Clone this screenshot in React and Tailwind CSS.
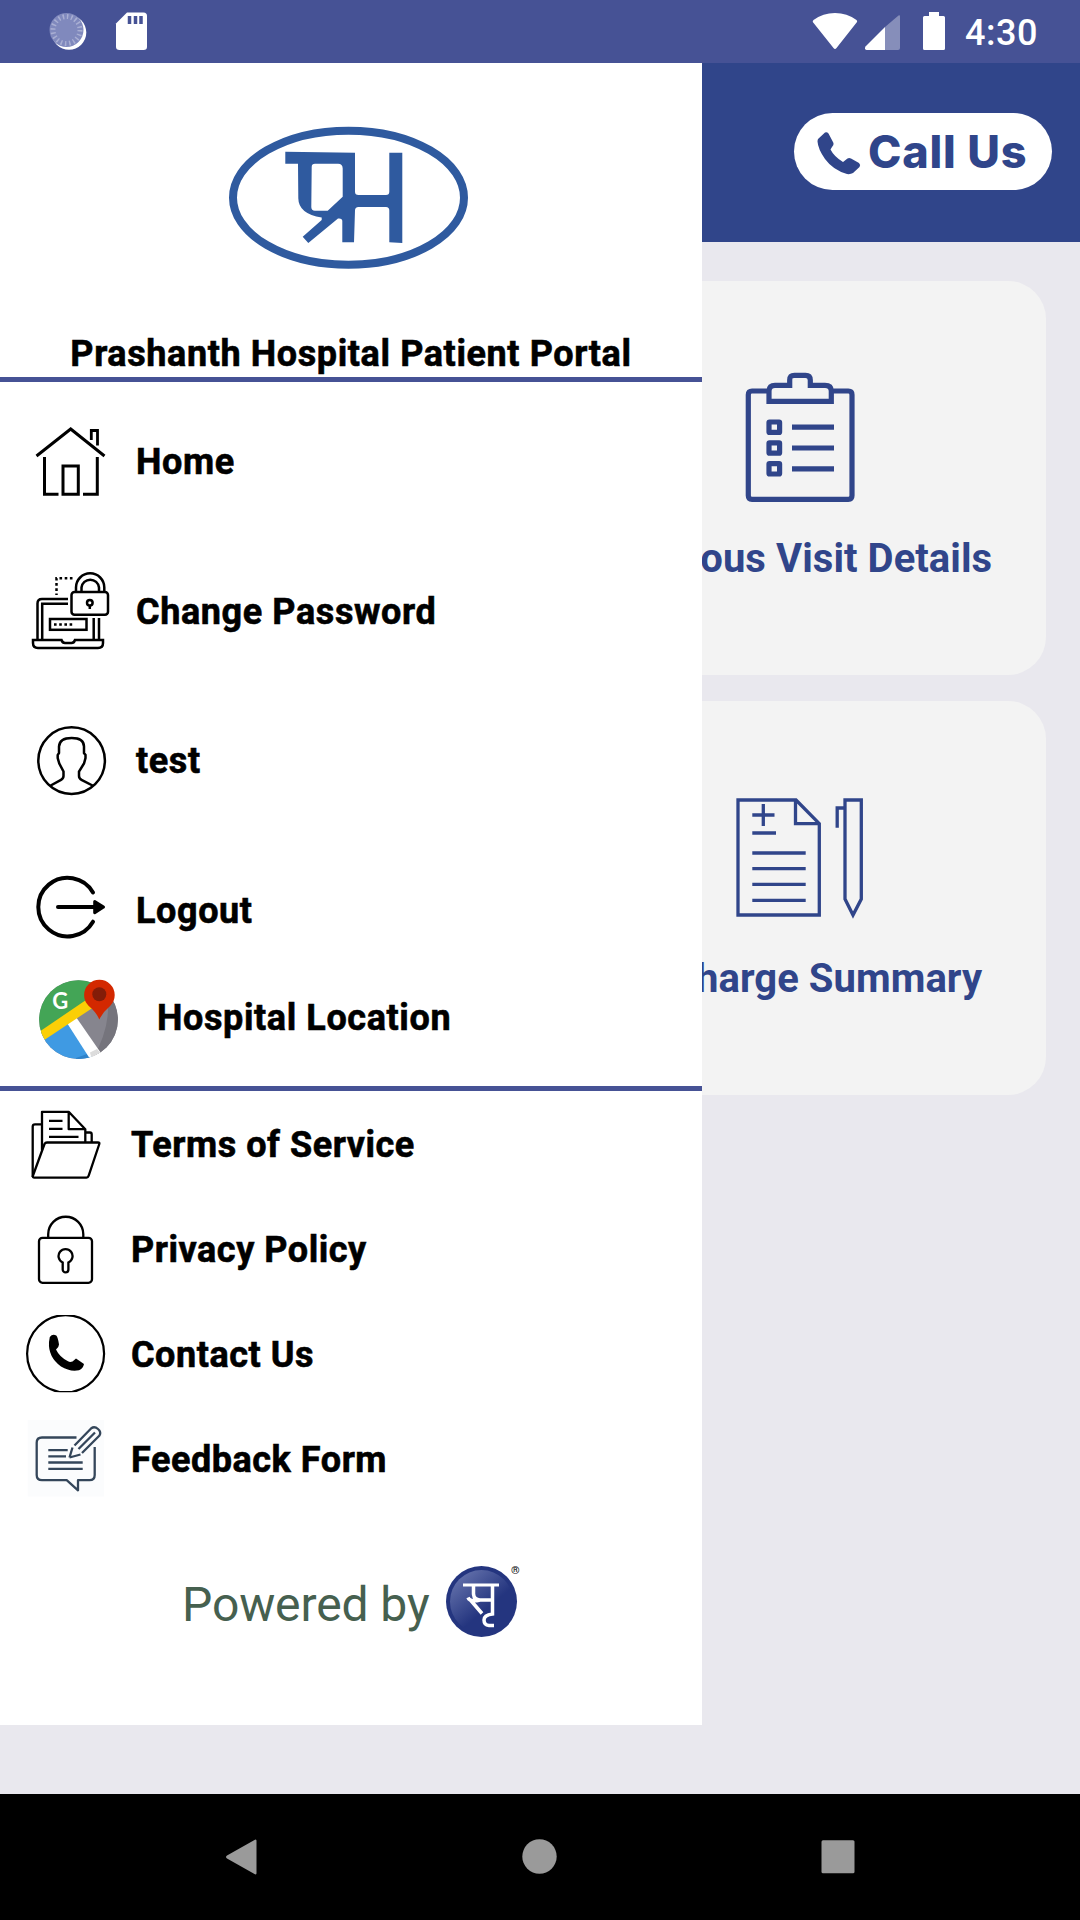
import React from 'react';

const HospitalLogo = () => (
  <svg width="248" height="150" viewBox="0 0 248 150" className="ml-[225px] mt-[59px] shrink-0">
    <ellipse cx="123.5" cy="75.7" rx="115.5" ry="67" fill="none" stroke="#2f5a9f" strokeWidth="8" />
    <path
      fill="#2f5a9f"
      fillRule="evenodd"
      d="M60.3 29.7 130 30.7V69.7Q130 73 133.5 73H161Q164.3 73 164.3 69.7V30.7H177.3V121L164.3 120.3V88.5Q164.3 85 161 85H133.5Q130 85 130 88.5L129 120.3H117.3V99Q117.3 96 113 96.500L83.300 121 77.700 114.700 96.700 98V95.500Q73.500 92 73.300 76.300L73 41.700H60.300ZM90 41.700Q86.700 41.700 86.700 45L86.300 85Q86.300 88.700 90 88.700H102.700L117.700 74.700V46.500Q117.700 41.700 113 41.700Z"
    />
  </svg>
);

const HomeIcon = () => (
  <g strokeWidth="3">
    <path d="M36.500 34 70.700 7 104.500 34" />
    <path d="M44.500 35V72.300H58.500M97.300 35V72.300H83" />
    <path d="M63 72.300V44H78.300V72.300Z" />
    <path strokeWidth="2.800" d="M91.300 18V8.500H97.500V23.500" />
  </g>
);

const PasswordIcon = () => (
  <g strokeWidth="2.500">
    <path d="M76 20V15.500A14 14 0 0 1 104.300 15.500V20M81.500 20V15.500A8.800 8.800 0 0 1 99 15.500V20" />
    <rect x="71.500" y="20" width="36.500" height="22.700" rx="3" />
    <circle cx="89.800" cy="30.800" r="2.800" />
    <path d="M89.800 34V37" />
    <path strokeDasharray="2.600 2.600" d="M72.500 6.300H56.500V23" />
    <path d="M68 27H42Q37.500 27 37.500 31.500V67.500M68 31.700H42.200V67.500M93.700 46V67.500M99 46V67.500" />
    <path d="M33 68H61.500Q62.500 71 65 71H71.500Q74 71 75 68H103V71Q103 76 98 76H38Q33 76 33 71Z" />
    <rect x="50" y="47" width="36.500" height="10.800" />
    <path strokeDasharray="2.600 2.600" d="M54 52.500H72.500" />
  </g>
);

const UserIcon = () => (
  <g strokeWidth="2.500">
    <circle cx="71.600" cy="39.600" r="33.300" />
    <path d="M50.700 64.500 61 58.800Q63.500 57.500 63.500 55V50.500L59.300 42.500 57.700 37V34L59 32V25.500Q59.500 17 71.700 17T84 25.500V32L85.500 34V37L84 42.500 79 50.500V55Q79 57.500 81.500 58.800L92.500 64.500" />
  </g>
);

const LogoutIcon = () => (
  <g strokeWidth="4">
    <path strokeLinecap="round" d="M93 21.500A29.300 29.300 0 1 0 93 50.700" />
    <path strokeLinecap="round" d="M58 36.100H95" />
    <path strokeLinejoin="round" fill="#000" strokeWidth="3" d="M94.700 30.600 103.500 36.100 94.700 41.700Z" />
  </g>
);

const FolderIcon = () => (
  <g strokeWidth="2.300" strokeLinejoin="round">
    <path d="M41.500 19.300H35Q32.700 19.300 32.700 21.500V72M42 45V6.800H68.700L85.300 24.200V37M68.700 6.800V24.200H85.300M86 27.500H90Q91.700 27.500 91.700 29.500V37" />
    <path d="M47 37.500H98Q99.800 37.500 99.300 39L88.700 70.700Q88 72.700 86.500 72.700H34.500Q32.300 72.700 33 70.500L44.500 39Q45.300 37.500 47 37.500Z" />
    <path d="M49 15.800H62.500M49 23.800H62.500M49 31.800H78.500" />
  </g>
);

const LockIcon = () => (
  <g strokeWidth="2.300">
    <path d="M48.200 27.500V24.300A17.500 17.500 0 0 1 83.300 24.300V27.500" />
    <rect x="39" y="27.800" width="53" height="45" rx="3.500" />
    <path d="M62.700 52.500A7 7 0 1 1 68.400 52.500V59.500A2.800 2.800 0 0 1 62.700 59.500Z" />
  </g>
);

const ContactIcon = () => (
  <g>
    <clipPath id="ring">
      <rect x="0" y="-4" width="131" height="81.300" />
    </clipPath>
    <circle clipPath="url(#ring)" cx="65.600" cy="38.700" r="38.500" strokeWidth="2.200" />
    <path
      fill="#000"
      stroke="none"
      d="M49.800 22Q52.500 18.300 56.300 20.500Q58 22.500 59 29.500Q59 32 56 34.500Q59.500 42 68 46.300Q70 47.500 72.500 46.500L76 43.500 84 49Q83 54 79 55.200Q70 57 61 51.500Q48 42 49 27Z"
    />
  </g>
);

const FeedbackIcon = () => (
  <g stroke="#34465a" strokeWidth="2.300" strokeLinejoin="round">
    <rect x="27.700" y="0" width="76.300" height="76.500" fill="#fbfcfd" stroke="none" />
    <path d="M76.500 17.500H42Q36.700 17.500 36.700 22.800V55Q36.700 60.200 42 60.200H66.700L78 70.300V60.200H89.500Q94.700 60.200 94.700 55V27" />
    <path d="M48.300 30.200H67.700M48.300 36.300H66M48.300 42.500H82.700M48.300 48.800H82.700" />
    <path d="M69.500 37.500 72.500 27.500M69.500 37.500 80.500 34.500M74.500 25.500 91.300 8.300Q94.500 6 98 9T99.500 15.500L82 33M78.500 29 95 12.500" />
  </g>
);

const MapIcon = () => (
  <svg width="157" height="84" viewBox="0 0 157 84" className="shrink-0">
    <clipPath id="map">
      <circle cx="78.500" cy="43.700" r="39.400" />
    </clipPath>
    <g clipPath="url(#map)">
      <rect x="38" y="0" width="84" height="84" fill="#86858e" />
      <path d="M107 20Q112 50 92 84H122V20Z" fill="#75747c" />
      <path d="M38 0H110V14L38 62Z" fill="#43a556" />
      <path d="M40 60 69 44.500 94 84H38Z" fill="#3f9ae3" />
      <path d="M87 78 92 84H76V82Z" fill="#2f83cb" />
      <path d="M67 47 76 41 103 80 92 86Z" fill="#fff" />
      <path d="M90 76.500 97 73 103 80 92 84Z" fill="#dcdcdc" />
      <path d="M36 58 100 14.500 106 23 42 65.500Z" fill="#fbcf06" />
    </g>
    <text x="52.300" y="32.500" fontSize="22" fontWeight="700" fill="#fff" className="font-['Lato',sans-serif] [-webkit-text-stroke:0px]">G</text>
    <path d="M99.300 43.400Q96 36 88.500 29.800A15.300 15.300 0 1 1 110.300 29.800Q103 36 99.300 43.400Z" fill="#d32800" />
    <circle cx="99.300" cy="18.200" r="7" fill="#831c08" />
  </svg>
);

const ClipboardIcon = () => (
  <svg width="112" height="132" viewBox="0 0 112 132" fill="none" stroke="#30458a" strokeWidth="5.200">
    <path d="M25 19H8Q4.300 19 4.300 22.700V123.500Q4.300 127.300 8 127.300H104.300Q108 127.300 108 123.500V22.700Q108 19 104.300 19H87.300" />
    <path d="M25 29.300V19Q25 13.300 31 13.300H45.700V8Q45.700 3.300 50.500 3.300H61.500Q66.300 3.300 66.300 8V13.300H81Q87.300 13.300 87.300 19V29.300Z" />
    {[50, 70.8, 91.6].map((y) => (
      <g key={y}>
        <rect x="25" y={y} width="10.600" height="10.400" rx="0.500" />
        <path d={`M48 ${y + 5.2}H90`} />
      </g>
    ))}
  </svg>
);

const DischargeIcon = () => (
  <svg width="134" height="122" viewBox="0 0 134 122" fill="none" stroke="#30458a" strokeWidth="3.300">
    <path d="M5 3H63L86.300 26.700V118H5ZM62.500 3V26.700H86.300" />
    <path d="M19.300 18H41.500M30.300 7V29M19.300 36H43M19.300 56H72.700M19.300 71.700H72.700M19.300 87.400H72.700M19.300 103.300H72.700" />
    <path d="M112 3H128.300V102L120 118 112 102ZM112 11H104.200V30.700" />
  </svg>
);

const menuItems = [
  { label: 'Home', icon: HomeIcon },
  { label: 'Change Password', icon: PasswordIcon },
  { label: 'test', icon: UserIcon },
  { label: 'Logout', icon: LogoutIcon },
];

const infoItems = [
  { label: 'Terms of Service', icon: FolderIcon },
  { label: 'Privacy Policy', icon: LockIcon },
  { label: 'Contact Us', icon: ContactIcon },
  { label: 'Feedback Form', icon: FeedbackIcon },
];

const cards = [
  { label: 'Previous Visit Details', icon: ClipboardIcon },
  { label: 'Discharge Summary', icon: DischargeIcon },
];

const StatusBar = () => (
  <div className="flex h-[63px] items-start justify-between bg-[#465295] text-white">
    <svg width="160" height="63" viewBox="0 0 160 63">
      <circle cx="69" cy="32.500" r="17.300" fill="#fff" />
      <circle cx="66.500" cy="30" r="17" fill="#8089bd" />
      <circle cx="66.500" cy="30" r="13.500" fill="none" stroke="#a9afd3" strokeWidth="5" strokeDasharray="1.500 2.740" />
      <path fill="#fff" d="M127 12.500H143.500Q147 12.500 147 16V47Q147 50 143.500 50H119.500Q116 50 116 47V23.500Z" />
      <path stroke="#465295" strokeWidth="3.500" d="M129.500 16V24M135.500 16V24M141 16V24" />
    </svg>
    <div className="flex">
      <svg width="153" height="63" viewBox="0 0 153 63" fill="#fff">
        <path d="M.8 22Q.5 20.800 1.500 20Q11 13 23 13T44.500 20Q45.500 20.800 45 22L24.500 48Q23 50 21.500 48Z" />
        <path fillOpacity=".35" d="M73 27 86.500 15.500Q88 14.500 88 16.500V48Q88 50 86 50H73Z" />
        <path d="M73 27V50H54.500Q52 49.500 53.500 46.500Z" />
        <path d="M117 12H127V16H131.500Q133 16 133 17.500V48.500Q133 50 131.500 50H112.500Q111 50 111 48.500V17.500Q111 16 112.500 16H117Z" />
      </svg>
      <span className="w-[115px] pt-[12px] text-[36px] leading-[42px] font-medium tracking-[0.5px]">4:30</span>
    </div>
  </div>
);

const Drawer = () => (
  <aside className="absolute top-0 left-0 flex h-[1662px] w-[702px] flex-col bg-white text-[36px] leading-[42px] font-bold tracking-[0.6px] text-black [-webkit-text-stroke:0.6px]">
    <div className="flex h-[319px] flex-col justify-between border-b-[5px] border-[#465295] pb-[2px]">
      <HospitalLogo />
      <h1 className="text-center">Prashanth Hospital Patient Portal</h1>
    </div>

    <div className="h-[709px] border-b-[5px] border-[#465295] pt-[5px]">
      {menuItems.map(({ label, icon: Icon }) => (
        <div key={label} className="flex h-[149.7px] items-center">
          <svg width="136" height="80" viewBox="0 0 136 80" fill="none" stroke="#000">
            <Icon />
          </svg>
          <span>{label}</span>
        </div>
      ))}
      <div className="flex h-[64px] items-center">
        <MapIcon />
        <span>Hospital Location</span>
      </div>
    </div>

    <div className="pt-px tracking-[0.54px]">
      {infoItems.map(({ label, icon: Icon }) => (
        <div key={label} className="flex h-[105px] items-center">
          <svg width="131" height="80" viewBox="0 0 131 80" fill="none" stroke="#000">
            <Icon />
          </svg>
          <span>{label}</span>
        </div>
      ))}
    </div>

    <div className="flex h-[183px] items-center pl-[182px] font-normal tracking-[-0.1px] [-webkit-text-stroke:0px]">
      <span className="w-[264px] pt-[2px] text-[48px] leading-[56px] text-[#46604f]">Powered by</span>
      <svg width="76" height="78" viewBox="0 0 76 78">
        <defs>
          <linearGradient id="shine" x1="0.100" y1="0" x2="0.600" y2="0.600">
            <stop offset="0" stopColor="#6b78b0" />
            <stop offset="1" stopColor="#24357f" />
          </linearGradient>
        </defs>
        <circle cx="35.500" cy="36.500" r="35.500" fill="#24357f" />
        <circle cx="35.500" cy="36.500" r="31.500" fill="url(#shine)" />
        <g fill="none" stroke="#fff" strokeWidth="3.500">
          <path d="M17 20H53" strokeWidth="3" />
          <path d="M27.500 20.500V29Q28 35 34 35H46.500M22 32.500Q24 37.500 34 35M24 34.500 36 48.500" />
          <path d="M46.500 20.500V49Q38 50 38 55T43 60.500H48" />
        </g>
        <text x="65" y="9" fontSize="11" fontWeight="700" fill="#111">®</text>
      </svg>
    </div>
  </aside>
);

const App = () => {
  return (
    <div className="flex h-[1920px] w-[1080px] flex-col overflow-hidden bg-[#e9e8ee] font-['Roboto',sans-serif]">
      <StatusBar />

      <main className="relative flex-1">
        <header className="flex h-[179px] justify-end bg-[#30458a] pt-[50px] pr-[28px]">
          <button className="flex h-[77px] w-[258px] items-center rounded-full bg-white pl-[23px] text-[#30458a]">
            <svg width="44" height="46" viewBox="0 0 44 46" fill="currentColor" className="mt-[5px] shrink-0">
              <path d="M1 8 8 1.500Q10 .5 11.500 2.500L16.500 12Q17 14 15 16L13.500 18.500Q17 25.500 26 31L30.500 27.500Q32 26.500 34 27.500L42 32Q44 34 42.500 36L36 42Q33.500 43.500 30 43Q16 39 8 28Q1 18 .5 10.500Q.5 9 1 8Z" />
            </svg>
            <span className="ml-[7px] font-['Inter',sans-serif] text-[45px] leading-[54px] font-extrabold tracking-[0.8px] whitespace-nowrap">Call Us</span>
          </button>
        </header>

        <div className="flex flex-col items-end gap-[26px] pt-[39px] pr-[34px]">
          {cards.map(({ label, icon: Icon }) => (
            <div key={label} className="flex h-[394px] w-[492px] flex-col items-center rounded-[38px] bg-[#f3f3f3]">
              <div className="flex h-[254px] items-center pt-[60px]">
                <Icon />
              </div>
              <p className="text-[40px] leading-[48px] font-bold tracking-[0.05px] text-[#30458a]">{label}</p>
            </div>
          ))}
        </div>

        <Drawer />
      </main>

      <nav className="flex h-[126px] items-center justify-between bg-black pr-[224px] pl-[223px]">
        <svg width="36" height="36" viewBox="0 0 36 36" fill="#9a9a9a">
          <path d="M33.500 1.500V34.500Q33 36 31.500 35L4 19.500Q2 18 4 16.500L31.500 1Q33 0 33.500 1.500Z" />
        </svg>
        <svg width="36" height="36" viewBox="0 0 36 36" fill="#9a9a9a">
          <circle cx="17.500" cy="17.500" r="17.200" />
        </svg>
        <svg width="36" height="36" viewBox="0 0 36 36" fill="#9a9a9a">
          <rect x="1.500" y="1.300" width="33" height="33" rx="1.500" />
        </svg>
      </nav>
    </div>
  );
};

export default App;
